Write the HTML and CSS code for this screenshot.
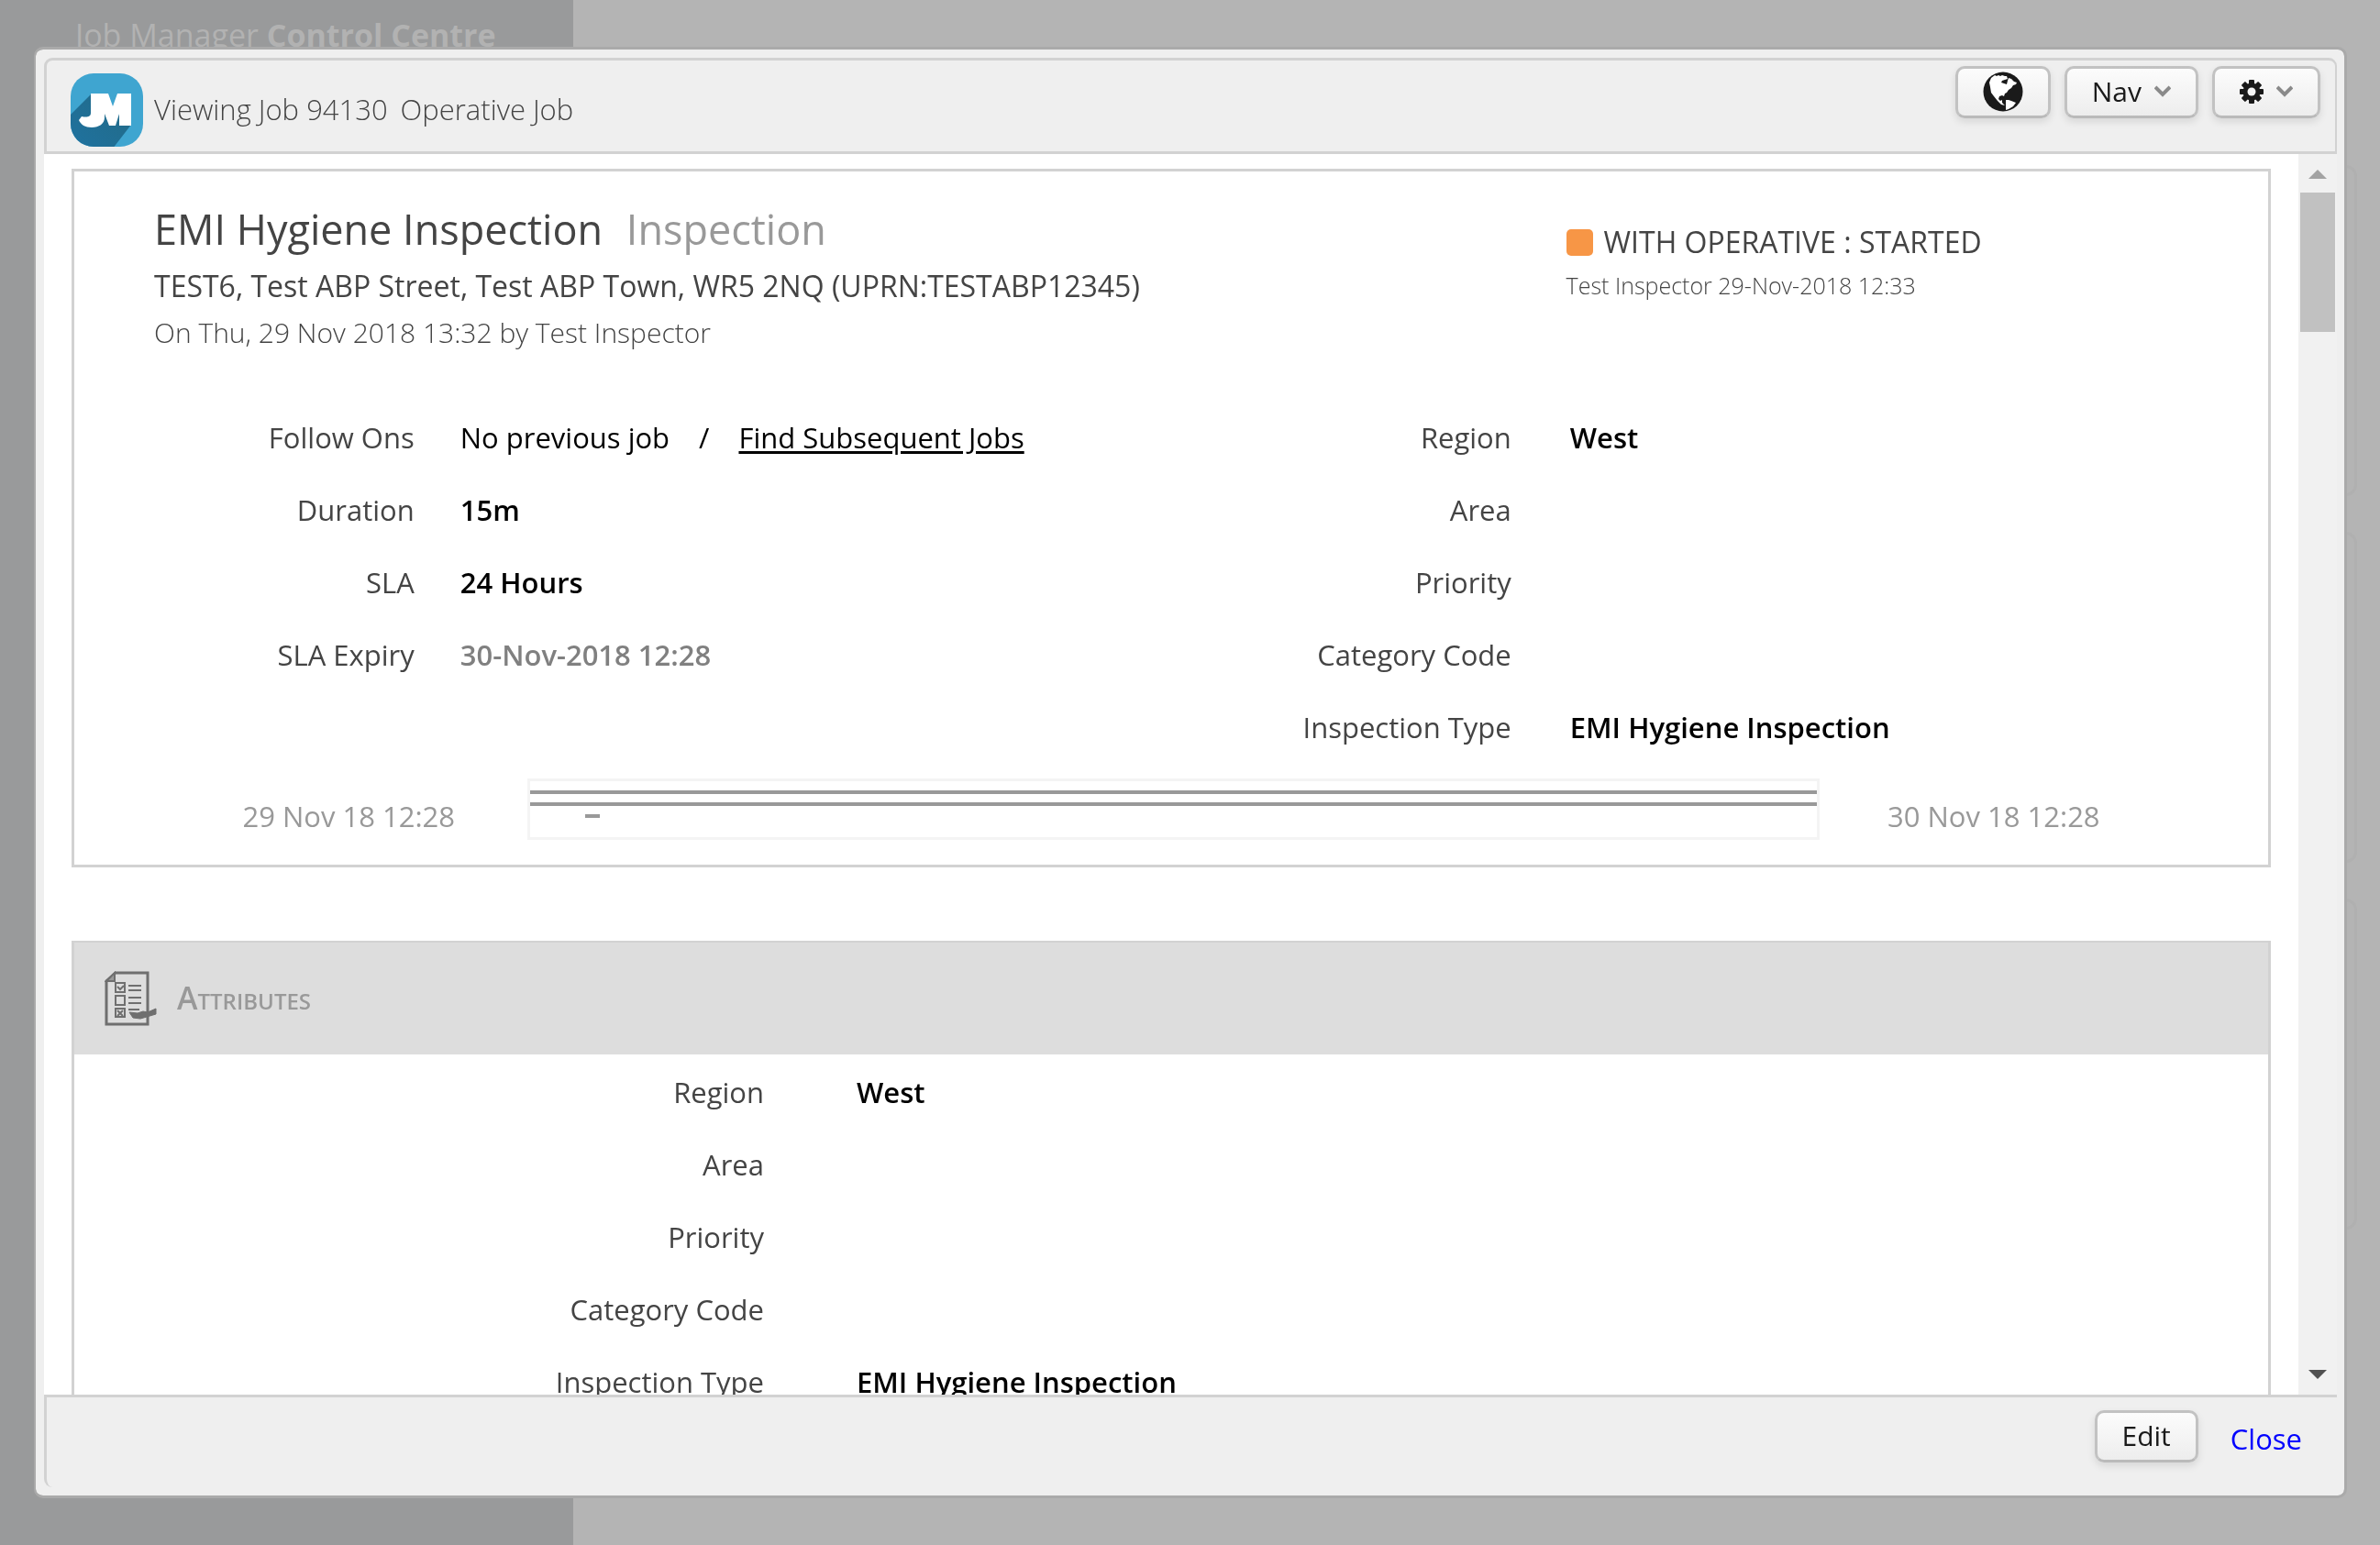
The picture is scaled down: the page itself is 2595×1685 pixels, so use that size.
FILE: index.html
```html
<!DOCTYPE html>
<html lang="en">
<head>
<meta charset="utf-8">
<title>Job Manager Control Centre</title>
<link rel="stylesheet" href="styles.css">
</head>
<body>
<div class="page">
  <div class="page-side">
    <div class="page-title">Job Manager <b>Control Centre</b></div>
  </div>
  <div class="page-main">
    <div class="page-card"></div>
    <div class="page-card"></div>
    <div class="page-card"></div>
  </div>
</div>

<div class="overlay">
  <section class="dialog" role="dialog" aria-labelledby="dialog-title">
    <header class="dialog-head">
      <div class="brand">
        <svg class="logo" viewBox="0 0 79 80" aria-hidden="true">
          <defs>
            <clipPath id="logo-clip"><rect width="79" height="80" rx="25"/></clipPath>
            <linearGradient id="logo-shade" x1="0" y1="1" x2="1" y2="0">
              <stop offset="0" stop-color="#1f73a3"/><stop offset="1" stop-color="#226a85"/>
            </linearGradient>
          </defs>
          <g clip-path="url(#logo-clip)">
            <rect width="79" height="80" fill="#3fa5d0"/>
            <path d="M23 22 -6 51v40h45l27-35z" fill="url(#logo-shade)"/>
            <path d="M22 22h19l5 14 5-14h15v35H53V44l-4 13h-7l-5-13v4c0 7-6 11-14 11-7 0-12-3-14-8l3-4c5 1 10 1 10-4z" fill="#fff"/>
          </g>
        </svg>
        <h1 class="dialog-title" id="dialog-title"><span>Viewing Job 94130</span><span>Operative Job</span></h1>
      </div>
      <div class="toolbar">
        <button class="btn" type="button" aria-label="Map">
          <svg class="icon-globe" viewBox="0 0 44 44" aria-hidden="true">
            <circle cx="22" cy="22" r="21.5" fill="#1a1a1a"/>
            <path d="M7 12l2-5 4-3 2 1 2-1 2 1 2-1 3 1 2 0 1 3-3 1-3 1-1 2 3 1 3 1 1-4 1-3 3 1 3 3 3 1-1 2-3 1-2 3-3 2-2 3-2 1-1 3-2-1-3 1-1 3 2 2 2-1 0 3 3 3-4-1-4-4-4-5-3-4-1-6z" fill="#fff"/>
            <path d="M25 31l3 0 3 1 5 2-3 4-5 3-3 1 0-5z" fill="#fff"/>
          </svg>
        </button>
        <button class="btn" type="button">Nav
          <svg class="icon-chevron" viewBox="0 0 18 14" aria-hidden="true"><path d="M1 2l8 8 8-8" fill="none" stroke="#8a8a8a" stroke-width="4"/></svg>
        </button>
        <button class="btn" type="button" aria-label="Settings">
          <svg class="icon-gear" viewBox="-13 -13 26 26" aria-hidden="true">
            <g fill="#1a1a1a">
              <rect x="-3" y="-13" width="6" height="26" rx="1"/>
              <rect x="-3" y="-13" width="6" height="26" rx="1" transform="rotate(45)"/>
              <rect x="-3" y="-13" width="6" height="26" rx="1" transform="rotate(90)"/>
              <rect x="-3" y="-13" width="6" height="26" rx="1" transform="rotate(135)"/>
              <circle r="9.5"/>
            </g>
            <circle r="4.5" fill="#f5f5f5"/>
          </svg>
          <svg class="icon-chevron" viewBox="0 0 18 14" aria-hidden="true"><path d="M1 2l8 8 8-8" fill="none" stroke="#8a8a8a" stroke-width="4"/></svg>
        </button>
      </div>
    </header>

    <div class="dialog-body">
      <div class="content">
        <article class="panel summary">
          <div class="summary-head">
            <div class="job">
              <h2 class="job-title">EMI Hygiene Inspection <span class="job-kind">Inspection</span></h2>
              <p class="job-address">TEST6, Test ABP Street, Test ABP Town, WR5 2NQ (UPRN:TESTABP12345)</p>
              <p class="job-logged">On Thu, 29 Nov 2018 13:32 by Test Inspector</p>
            </div>
            <div class="status">
              <p class="status-name"><span class="status-mark"></span>WITH OPERATIVE : STARTED</p>
              <p class="status-by">Test Inspector 29-Nov-2018 12:33</p>
            </div>
          </div>
          <div class="columns">
            <dl class="fields">
              <dt>Follow Ons</dt><dd class="follow"><span>No previous job</span><span>/</span><a href="#subsequent">Find Subsequent Jobs</a></dd>
              <dt>Duration</dt><dd>15m</dd>
              <dt>SLA</dt><dd>24 Hours</dd>
              <dt>SLA Expiry</dt><dd class="muted">30-Nov-2018 12:28</dd>
            </dl>
            <dl class="fields fields-right">
              <dt>Region</dt><dd>West</dd>
              <dt>Area</dt><dd></dd>
              <dt>Priority</dt><dd></dd>
              <dt>Category Code</dt><dd></dd>
              <dt>Inspection Type</dt><dd>EMI Hygiene Inspection</dd>
            </dl>
          </div>
          <div class="timeline">
            <span class="timeline-start">29 Nov 18 12:28</span>
            <div class="timeline-chart">
              <div class="bar"></div>
              <div class="bar"></div>
              <div class="bar bar-visit"></div>
            </div>
            <span>30 Nov 18 12:28</span>
          </div>
        </article>

        <article class="panel attributes">
          <h2 class="section-title">
            <svg class="icon-form" viewBox="0 0 58 60" fill="none" stroke="#6f6f6f" aria-hidden="true">
              <path d="M12 2h35v56H2V11z" stroke-width="3"/>
              <path d="M11 2v9H2z" fill="#999" stroke-width="2"/>
              <path d="M12 13h10v10H12zM12 27h10v10H12zM12 41h10v9H12zM14 17l3 3 4-4M14 43l6 6M20 43l-6 6" stroke-width="2"/>
              <path d="M26 16h14M26 21h14M26 29h14M26 35h14M26 42h12" stroke-width="2"/>
              <path d="M27 45l9 1 6-2 5 1 9-4v6l-10 3-7 2-8-1z" fill="#6f6f6f" stroke-width="1"/>
            </svg>
            <span class="section-name">Attributes</span>
          </h2>
          <dl class="fields fields-wide">
            <dt>Region</dt><dd>West</dd>
            <dt>Area</dt><dd></dd>
            <dt>Priority</dt><dd></dd>
            <dt>Category Code</dt><dd></dd>
            <dt>Inspection Type</dt><dd>EMI Hygiene Inspection</dd>
          </dl>
        </article>
      </div>
      <div class="scrollbar" aria-hidden="true">
        <svg class="scroll-arrow" viewBox="0 0 42 42"><path d="M11 27l10-10 10 10z" fill="#a3a3a3"/></svg>
        <div class="scroll-thumb"></div>
        <svg class="scroll-arrow scroll-down" viewBox="0 0 42 42"><path d="M11 15l10 10 10-10z" fill="#505050"/></svg>
      </div>
    </div>

    <footer class="dialog-foot">
      <button class="btn" type="button">Edit</button>
      <a class="close" href="#close">Close</a>
    </footer>
  </section>
</div>
</body>
</html>
```
FILE: styles.css
```css
* { box-sizing: border-box; }

body {
  margin: 0;
  height: 100vh;
  overflow: hidden;
  background: #b4b4b4;
  color: #444;
  font: 31px/46px "Open Sans", sans-serif;
}

h1, h2, p, dl, dd { margin: 0; font-weight: 400; }

/* Page behind the dialog */
.page { display: flex; height: 100%; }
.page-side { width: 625px; background: #999a9b; padding: 15px 0 0 82px; }
.page-title { font-size: 34px; color: #b2b2b2; }
.page-main { flex: 1; display: flex; flex-direction: column; gap: 39px; padding: 180px 25px 0 0; }
.page-card { height: 361px; border: 3px solid #b0b0b0; border-radius: 12px; }

/* Dialog frame */
.overlay { position: fixed; inset: 0; display: flex; padding: 51px 36px 51px 37px; }
.dialog {
  flex: 1;
  display: flex;
  flex-direction: column;
  min-width: 0;
  padding: 9px 8px 9px 9px;
  background: #efefef;
  background-clip: padding-box;
  border: 3px solid #aaa;
  border-width: 3px 3px 3px 2px;
  border-radius: 10px;
}

.dialog-head {
  display: flex;
  justify-content: space-between;
  border: 3px solid #d2d2d2;
  border-width: 3px 2px 3px 3px;
  border-radius: 9px 9px 0 0;
}
.brand { display: flex; align-items: center; gap: 12px; padding: 14px 0 5px 26px; }
.logo { width: 79px; height: 80px; }
.dialog-title { display: flex; gap: 14px; padding-bottom: 2px; font-size: 31px; font-weight: 300; }

.toolbar { display: flex; align-items: flex-start; gap: 15px; padding: 6px 16px 0 0; }
.btn {
  display: flex;
  align-items: center;
  gap: 14px;
  height: 57px;
  padding: 0 27px 1px;
  border: 3px solid #c2c2c2;
  border-bottom-color: #bababa;
  border-radius: 10px;
  background: linear-gradient(#fcfcfc, #ededed);
  box-shadow: 0 4px 8px rgba(0, 0, 0, .1);
  color: #1a1a1a;
  font: 30px/46px "Open Sans", sans-serif;
}
.icon-globe { width: 44px; height: 44px; }
.icon-chevron { width: 18px; height: 14px; }
.icon-gear { width: 26px; height: 26px; }

/* Scrolling area */
.dialog-body { flex: 1; display: flex; min-height: 0; background: #fff; }
.content { flex: 1; overflow: hidden; padding: 16px 30px 0; }
.scrollbar { width: 42px; display: flex; flex-direction: column; background: #f1f1f1; }
.scroll-arrow { width: 42px; height: 42px; }
.scroll-thumb { height: 152px; margin: 0 2px; background: #c1c1c1; }
.scroll-down { margin-top: auto; }

.panel { border: 3px solid #d2d2d2; }
.summary { padding: 32px 0 27px; margin-bottom: 80px; }
.summary-head { display: grid; grid-template-columns: 68% 1fr; margin-bottom: 54px; }
.job { display: flex; flex-direction: column; gap: 8px; padding-left: 87px; }
.job-title { font-size: 45px; line-height: 62px; }
.job-kind { margin-left: 14px; color: #999; }
.job-address { font-size: 32px; }
.job-logged { font-size: 30px; line-height: 40px; font-weight: 300; }
.status { padding-top: 22px; }
.status-name { display: flex; align-items: center; gap: 12px; font-size: 32px; }
.status-mark { width: 29px; height: 29px; border-radius: 5px; background: #f79646; }
.status-by { padding-top: 4px; font-size: 25px; line-height: 40px; font-weight: 300; }

.columns { display: grid; grid-template-columns: 1fr 1fr; }
.fields {
  display: grid;
  grid-template-columns: 31% 1fr;
  grid-auto-rows: 79px;
  align-content: start;
  column-gap: 50px;
  line-height: 80px;
}
.fields dt { text-align: right; }
.fields dd { color: #000; font-weight: 600; }
.fields .muted { color: #808080; }
.fields .follow { display: flex; gap: 32px; font-weight: 400; }
.fields-right { column-gap: 64px; }
.fields-wide { grid-template-columns: 752fr 1539fr; column-gap: 101px; padding-top: 1px; }
.follow a { color: #000; text-underline-offset: 3px; }

.timeline {
  display: grid;
  grid-template-columns: 420fr 1409fr 415fr;
  column-gap: 74px;
  align-items: end;
  margin-top: 17px;
  color: #999;
  line-height: 52px;
}
.timeline-start { padding-right: 5px; text-align: right; }
.timeline-chart {
  display: flex;
  flex-direction: column;
  gap: 9px;
  height: 67px;
  padding-top: 10px;
  border: 3px solid #f4f4f4;
}
.bar { height: 4px; background: #999; }
.bar-visit { width: 16px; margin-left: 60px; }

.attributes { border-top-width: 2px; }
.section-title {
  display: flex;
  align-items: center;
  gap: 21px;
  height: 122px;
  padding-left: 33px;
  background: #ddd;
  color: #999;
}
.icon-form { width: 58px; height: 60px; }
.section-name { padding-bottom: 3px; font-size: 34px; font-weight: 600; font-variant: small-caps; }

.dialog-foot {
  display: flex;
  align-items: flex-start;
  justify-content: flex-end;
  gap: 35px;
  height: 101px;
  padding: 14px 38px 0 0;
  border-top: 3px solid #d2d2d2;
  border-left: 3px solid #d2d2d2;
  border-bottom-left-radius: 9px;
}
.close { color: #00f; line-height: 62px; text-decoration: none; }
```
